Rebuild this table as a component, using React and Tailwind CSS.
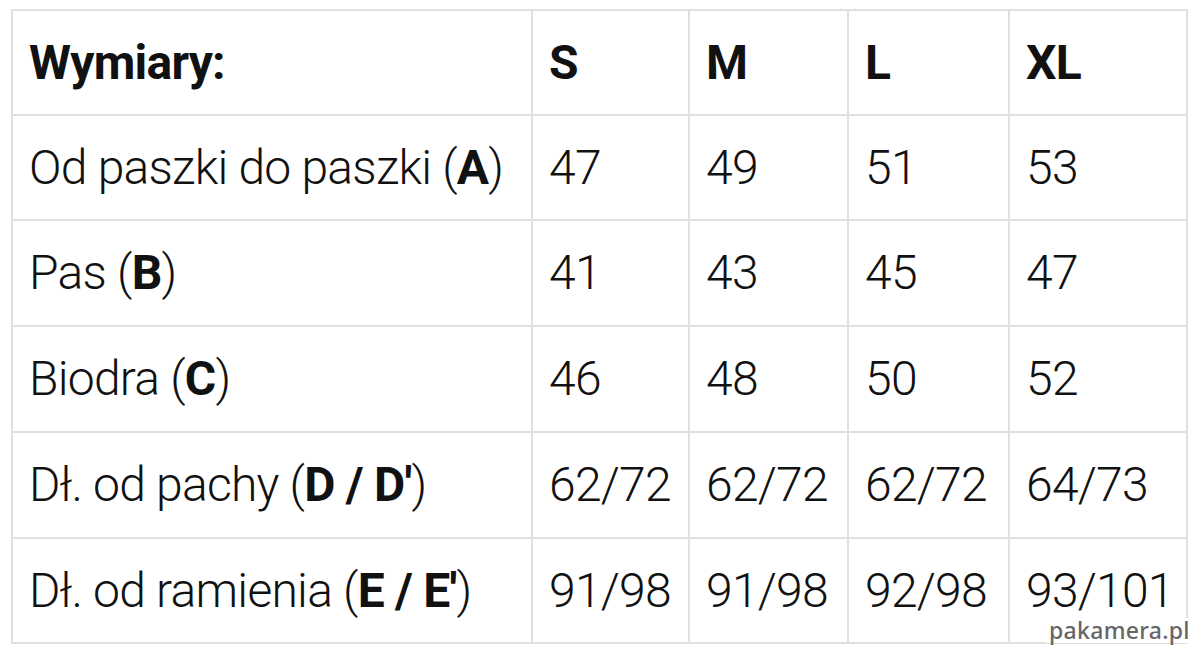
import React from "react";

const rows = [
  { label: ["Od paszki do paszki (", "A", ")"], vals: ["47", "49", "51", "53"] },
  { label: ["Pas (", "B", ")"], vals: ["41", "43", "45", "47"] },
  { label: ["Biodra (", "C", ")"], vals: ["46", "48", "50", "52"] },
  { label: ["Dł. od pachy (", "D / D'", ")"], vals: ["62/72", "62/72", "62/72", "64/73"] },
  { label: ["Dł. od ramienia (", "E / E'", ")"], vals: ["91/98", "91/98", "92/98", "93/101"] },
];

export default function App() {
  return (
    <div className="relative w-[1200px] h-[655px] bg-white overflow-hidden" style={{ fontFamily: "Roboto, 'Liberation Sans', sans-serif" }}>
      <div className="absolute left-[11px] top-[9px] grid grid-cols-[518px_155px_157px_159px_176px] grid-rows-[103px_103px_104px_104px_104px_103px] gap-[2px] p-[2px] bg-[#e0e0e0] text-[#111] text-[48px] leading-none tracking-[-0.75px]">
        <div className="bg-white flex items-center pl-[16px] font-bold">Wymiary:</div>
        {["S", "M", "L", "XL"].map((s) => (
          <div key={s} className="bg-white flex items-center pl-[16px] font-bold">{s}</div>
        ))}
        {rows.map((r, i) => (
          <React.Fragment key={i}>
            <div className="bg-white flex items-center pl-[16px] font-light whitespace-nowrap">
              {r.label[0]}<span className="font-bold">{r.label[1]}</span>{r.label[2]}
            </div>
            {r.vals.map((v, j) => (
              <div key={j} className="bg-white flex items-center pl-[16px] font-light whitespace-nowrap">{v}</div>
            ))}
          </React.Fragment>
        ))}
      </div>
      <div className="absolute left-[1046px] top-[618px] h-[25px] pl-[3px] pr-[1px] bg-white text-[23px] leading-[25px] text-[#666] font-medium tracking-[0.3px]" style={{ fontFamily: "'Noto Sans', sans-serif" }}>
        pakamera.pl
      </div>
    </div>
  );
}
